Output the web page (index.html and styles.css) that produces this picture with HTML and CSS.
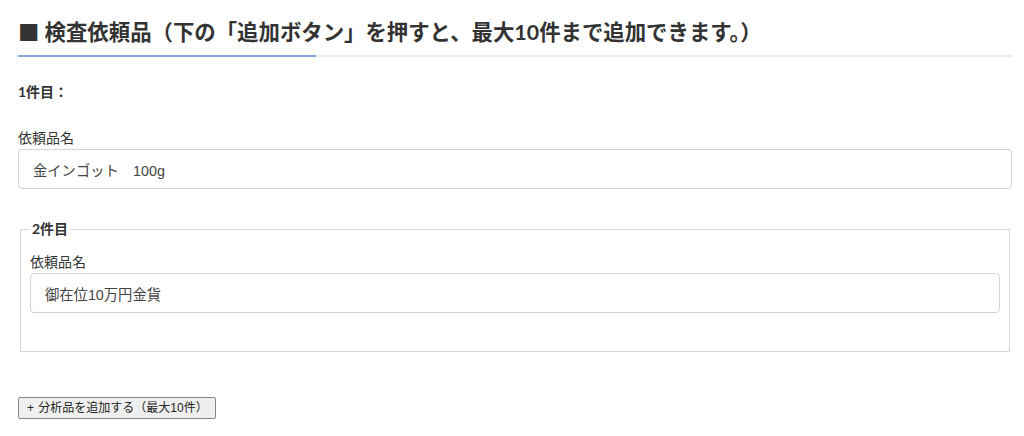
FILE: index.html
```html
<!DOCTYPE html>
<html lang="ja">
<head>
<meta charset="utf-8">
<title>検査依頼品</title>
<link rel="stylesheet" href="styles.css">
</head>
<body>
<div class="page">
  <h2 class="title">■ 検査依頼品（下の「追加ボタン」を押すと、最大10件まで追加できます。）</h2>
  <div class="rule"></div>

  <div class="item-head">1件目：</div>
  <div class="group">
    <label class="label">依頼品名</label>
    <input class="control" type="text" value="金インゴット　100g">
  </div>

  <fieldset class="item">
    <legend class="legend">2件目</legend>
    <div class="group">
      <label class="label">依頼品名</label>
      <input class="control" type="text" value="御在位10万円金貨">
    </div>
  </fieldset>

  <button class="add-btn" type="button"><span class="plus">+</span> 分析品を追加する（最大10件）</button>
</div>
</body>
</html>
```

FILE: styles.css
```css
html, body {
  margin: 0;
  padding: 0;
  background: #fff;
}

body {
  font-family: "Lato", "Noto Sans CJK JP", sans-serif;
  color: #333;
}

.page {
  padding: 0 12px 0 18px;
}

.title {
  margin: 0;
  padding-top: 18px;
  padding-bottom: 8px;
  font-size: 21.4px;
  line-height: 29px;
  font-weight: 700;
  color: #333;
  white-space: nowrap;
}

.rule {
  height: 2px;
  background: linear-gradient(to right, #80aadb 0, #80aadb 298px, #eeeeee 298px, #eeeeee 100%);
}

.item-head {
  margin-top: 25px;
  font-size: 14px;
  line-height: 20px;
  font-weight: 700;
}

.group {
  margin-top: 26px;
}

.label {
  display: block;
  font-size: 14px;
  line-height: 20px;
  margin-bottom: 1px;
  color: #333;
}

.control {
  display: block;
  box-sizing: border-box;
  width: 100%;
  height: 40px;
  margin: 0;
  padding: 0 14px;
  border: 1px solid #d4d4d4;
  border-radius: 4px;
  background: #fff;
  font-family: "Liberation Sans", "Noto Sans CJK JP", sans-serif;
  font-size: 14.3px;
  color: #444;
  outline: none;
}

.item {
  margin: 30px 2px 0;
  padding: 0 9px 38px;
  border: 1px solid #d8d8d8;
  min-width: 0;
}

.legend {
  padding: 0 2px;
  font-size: 14px;
  line-height: 20px;
  font-weight: 700;
}

.item .group {
  margin-top: 13px;
}

.add-btn {
  display: block;
  box-sizing: border-box;
  margin-top: 45px;
  height: 22px;
  padding: 0 7px 0 8px;
  border: 1px solid #858585;
  border-radius: 2px;
  background: #efefef;
  font-family: "Liberation Sans", "Noto Sans CJK JP", sans-serif;
  font-size: 12px;
  line-height: 20px;
  color: #222;
}

.plus {
  margin-right: 1px;
}
```
